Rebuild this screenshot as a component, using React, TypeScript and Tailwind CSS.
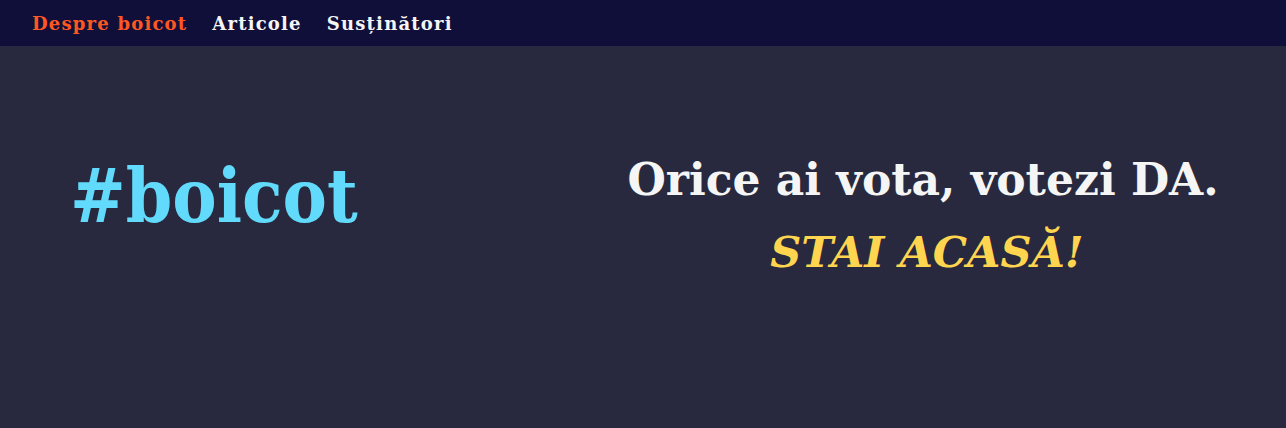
import React from 'react';

const navItems = [
    { label: 'Despre boicot', active: true },
    { label: 'Articole', active: false },
    { label: 'Susținători', active: false },
];

const App: React.FC = () => {
    return (
        <div className="w-[1286px] h-[428px] flex flex-col bg-[#28293e] font-['DejaVu_Serif',serif]">
            <nav className="h-[46px] bg-[#100f3a] flex items-center gap-[25px] pl-[32px] flex-shrink-0">
                {navItems.map(item => (
                    <a
                        key={item.label}
                        href="#"
                        className={`text-[18px] font-bold tracking-[1.2px] ${item.active ? 'text-[#ff5722]' : 'text-[#f5f5f5]'}`}
                    >
                        {item.label}
                    </a>
                ))}
            </nav>
            <main className="flex-grow flex items-start pt-[106px]">
                <div className="w-[600px] pl-[70px] pt-[7px]">
                    <h1 className="text-[74px] leading-none text-[#61dafb] font-bold font-['DejaVu_Serif_Condensed',serif]">#boicot</h1>
                </div>
                <div className="flex-grow flex flex-col items-center pr-[40px] text-center">
                    <p className="text-[44px] leading-[56px] font-bold text-[#f5f5f5]">Orice ai vota, votezi DA.</p>
                    <p className="mt-[14px] text-[43px] leading-[60px] font-bold italic text-[#ffd54f] pl-[8px]">STAI ACASĂ!</p>
                </div>
            </main>
        </div>
    );
};

export default App;
